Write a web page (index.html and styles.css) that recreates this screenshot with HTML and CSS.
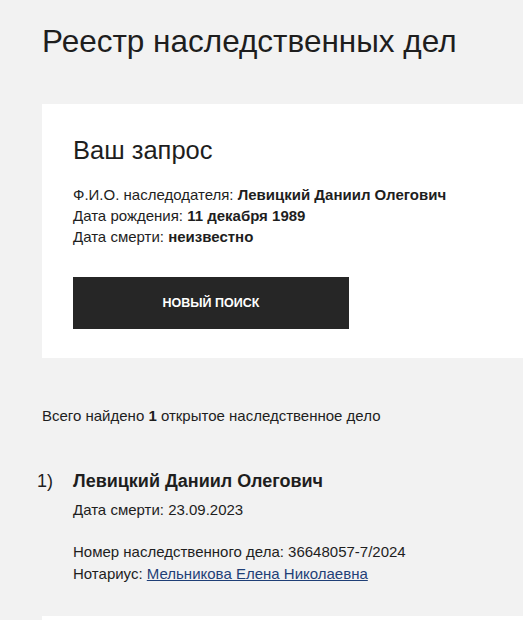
FILE: index.html
```html
<!DOCTYPE html>
<html lang="ru">
<head>
<meta charset="utf-8">
<title>Реестр наследственных дел</title>
<link rel="stylesheet" href="styles.css">
</head>
<body>
<main class="page">
  <h1 class="title">Реестр наследственных дел</h1>
  <section class="request">
    <h2 class="request-title">Ваш запрос</h2>
    <div class="request-info">
      <div>Ф.И.О. наследодателя: <b>Левицкий Даниил Олегович</b></div>
      <div>Дата рождения: <b>11 декабря 1989</b></div>
      <div>Дата смерти: <b>неизвестно</b></div>
    </div>
    <button class="btn" type="button">НОВЫЙ ПОИСК</button>
  </section>
  <p class="summary">Всего найдено <b>1</b> открытое наследственное дело</p>
  <ol class="results">
    <li class="result">
      <span class="num">1)</span>
      <div class="result-body">
        <div class="result-name">Левицкий Даниил Олегович</div>
        <div class="result-date">Дата смерти: 23.09.2023</div>
        <div class="result-meta">
          <div>Номер наследственного дела: 36648057-7/2024</div>
          <div>Нотариус: <a href="#" class="link">Мельникова Елена Николаевна</a></div>
        </div>
      </div>
    </li>
  </ol>
  <div class="next-card"></div>
</main>
</body>
</html>
```

FILE: styles.css
```css
html, body {
  margin: 0;
  padding: 0;
  background: #f2f2f2;
}
body {
  font-family: "Liberation Sans", Arial, sans-serif;
  color: #1e1e1e;
}
.page {
  padding: 0 0 0 42px;
}
.title {
  margin: 0;
  padding-top: 22px;
  font-size: 31.5px;
  line-height: 38px;
  font-weight: normal;
  color: #1e1e1e;
}
.request {
  margin-top: 44px;
  background: #fff;
  padding: 31px 0 29px 31px;
}
.request-title {
  margin: 0;
  font-size: 25.5px;
  line-height: 30px;
  font-weight: normal;
  color: #1e1e1e;
}
.request-info {
  margin-top: 19px;
  font-size: 15px;
  line-height: 21px;
}
.request-info b {
  font-weight: bold;
}
.btn {
  display: block;
  margin-top: 30px;
  width: 276px;
  height: 52px;
  border: none;
  background: #262626;
  color: #fff;
  font-family: "Liberation Sans", Arial, sans-serif;
  font-size: 12.5px;
  font-weight: bold;
  padding: 0;
  cursor: pointer;
}
.summary {
  margin: 49px 0 0 0;
  font-size: 15px;
  line-height: 18px;
}
.results {
  list-style: none;
  margin: 44px 0 0 0;
  padding: 0;
}
.result {
  display: flex;
  margin-left: -5px;
}
.num {
  width: 36px;
  font-size: 18px;
  line-height: 24px;
}
.result-name {
  font-size: 18px;
  line-height: 24px;
  font-weight: bold;
}
.result-date {
  margin-top: 7px;
  font-size: 15px;
  line-height: 20px;
}
.result-meta {
  margin-top: 21px;
  font-size: 15px;
  line-height: 22px;
}
.link {
  color: #1f3f77;
  text-decoration: underline;
}
.next-card {
  margin-top: 31px;
  height: 4px;
  background: #fff;
}
```
